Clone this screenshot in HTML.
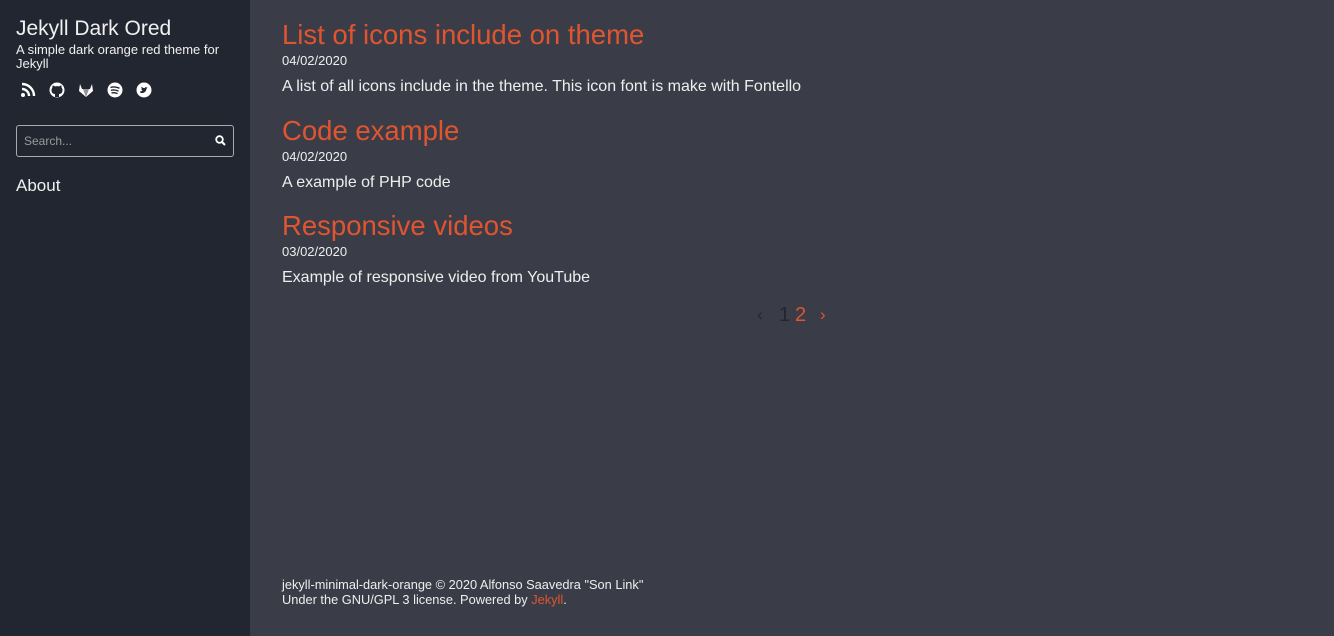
<!DOCTYPE html>
<html><head><meta charset="utf-8"><style>
*{margin:0;padding:0;box-sizing:border-box}
body{width:1334px;height:636px;background:#3a3d47;font-family:"Liberation Sans",sans-serif;color:#e6e6e6;position:relative;overflow:hidden}
.side{position:absolute;left:0;top:0;width:250px;height:636px;background:#222631}
.side h1{position:absolute;left:16px;top:17px;font-size:21px;font-weight:normal;color:#f0f0f0}
.side .d{position:absolute;left:16px;top:43px;width:220px;font-size:13px;line-height:14px;color:#f0f0f0}
.icons{position:absolute;left:20px;top:82px;display:flex;gap:13px}
.icons svg{width:16px;height:16px}
.search{position:absolute;left:16px;top:125px;width:218px;height:32px;border:1px solid #aaa;border-radius:3px;font-size:12px;color:#9a9a9a;padding:8px 7px}
.about{position:absolute;left:16px;top:176px;font-size:17px;color:#f0f0f0}
h2{font-size:27.5px;font-weight:normal;color:#e05530;position:absolute;white-space:nowrap}
.date{position:absolute;font-size:13px;color:#eee;white-space:nowrap}
.ex{position:absolute;font-size:16px;color:#eee;white-space:nowrap}
.foot{position:absolute;left:282px;top:577px;font-size:12.8px;line-height:15px;color:#eee;white-space:nowrap}
a{color:#e05530;text-decoration:none}
.pg{position:absolute;top:304px;font-size:20px}
</style></head><body>
<div class="side">
<h1>Jekyll Dark Ored</h1>
<div class="d">A simple dark orange red theme for Jekyll</div>
<div class="icons">
<svg viewBox="0 0 16 16"><circle cx="3" cy="13" r="2" fill="#fff"/><path d="M2 7a7 7 0 0 1 7 7M2 2a12 12 0 0 1 12 12" stroke="#fff" stroke-width="2.4" fill="none"/></svg>
<svg viewBox="0 0 16 16"><circle cx="8" cy="8" r="7.5" fill="#fff"/><path d="M6 15v-3c-2 0-3.5-1-3.5-4 0-1 .5-2 1-2.5-.2-.6 0-1.5.2-2 1 0 1.8.6 2.3 1a6 6 0 0 1 4 0c.5-.4 1.3-1 2.3-1 .2.5.4 1.4.2 2 .5.5 1 1.5 1 2.5 0 3-1.5 4-3.5 4v3z" fill="#222631"/></svg>
<svg viewBox="0 0 16 16"><path d="M8 15 1 9l1-7 2 5h8l2-5 1 7z" fill="#fff"/><path d="M8 15 5 7h6z" fill="#222631" opacity=".5"/></svg>
<svg viewBox="0 0 16 16"><circle cx="8" cy="8" r="7.5" fill="#fff"/><path d="M3.5 5.5c3-1 6-.7 9 .8M4 8.3c2.5-.7 5-.5 7.5.8M4.5 11c2-.5 4-.3 6 .6" stroke="#222631" stroke-width="1.4" fill="none"/></svg>
<svg viewBox="0 0 16 16"><circle cx="8" cy="8" r="7.5" fill="#fff"/><path d="M4 10.5c2 1 5 .5 6-2l.8-2.3 1-.7-1 .1c-.5-.7-1.8-.6-2 .5-1.5 0-2.5-.6-3.3-1.4-.4 1 0 2 .8 2.5-.5 0-1-.2-1-.2 0 .8.6 1.4 1.3 1.6-.5.5-1.5.6-2.6.9z" fill="#222631"/></svg>
</div>
<div class="search">Search...<svg style="position:absolute;right:7px;top:9px" width="11" height="11" viewBox="0 0 11 11"><circle cx="4.5" cy="4.5" r="3.3" stroke="#fff" stroke-width="1.8" fill="none"/><path d="M7 7l3 3" stroke="#fff" stroke-width="2"/></svg></div>
<div class="about">About</div>
</div>
<h2 style="left:282px;top:19px">List of icons include on theme</h2>
<div class="date" style="left:282px;top:53px">04/02/2020</div>
<div class="ex" style="left:282px;top:78px">A list of all icons include in the theme. This icon font is make with Fontello</div>
<h2 style="left:282px;top:115px">Code example</h2>
<div class="date" style="left:282px;top:149px">04/02/2020</div>
<div class="ex" style="left:282px;top:174px">A example of PHP code</div>
<h2 style="left:282px;top:210px">Responsive videos</h2>
<div class="date" style="left:282px;top:244px">03/02/2020</div>
<div class="ex" style="left:282px;top:269px">Example of responsive video from YouTube</div>
<div class="pg" style="left:757px;color:#222631;font-size:17px;top:305px">‹</div>
<div class="pg" style="left:779px;color:#222631">1</div>
<div class="pg" style="left:795px;color:#e05530">2</div>
<div class="pg" style="left:820px;color:#e05530;font-size:17px;top:305px">›</div>
<div class="foot">jekyll-minimal-dark-orange © 2020 Alfonso Saavedra "Son Link"<br>Under the GNU/GPL 3 license. Powered by <a>Jekyll</a>.</div>
</body></html>
